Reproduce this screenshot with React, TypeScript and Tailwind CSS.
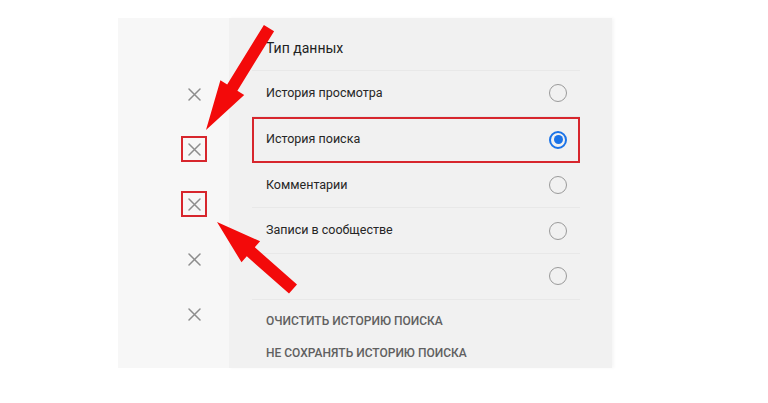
import React from 'react';

const rows = [
  { label: 'История просмотра', checked: false },
  { label: 'История поиска', checked: true },
  { label: 'Комментарии', checked: false },
  { label: 'Записи в сообществе', checked: false },
  { label: '', checked: false },
];

function CloseIcon() {
  return (
    <svg width="13" height="13" viewBox="0 0 13 13" fill="none">
      <path d="M1 1L12 12M12 1L1 12" stroke="#8d8d8d" strokeWidth="1.5" strokeLinecap="round" />
    </svg>
  );
}

function Radio({ checked }: { checked: boolean }) {
  if (checked) {
    return (
      <div className="w-[18px] h-[18px] rounded-full border-2 border-[#1a73e8] flex items-center justify-center">
        <div className="w-[9px] h-[9px] rounded-full bg-[#1a73e8]" />
      </div>
    );
  }
  return <div className="w-[18px] h-[18px] rounded-full border-[1.5px] border-[#9a9a9a]" />;
}

export default function App() {
  return (
    <div
      className="relative w-[768px] h-[403px] bg-white overflow-hidden"
      style={{ fontFamily: 'Roboto, "Liberation Sans", sans-serif' }}
    >
      <div className="pt-[18px] pl-[118px] flex">
        {/* ─── left column with remove icons ─── */}
        <div className="w-[111px] h-[350px] bg-[#f7f7f7] flex flex-col items-start pl-[63px] pt-[63px] gap-[29px]">
          {[false, true, true, false, false].map((marked, i) => (
            <div
              key={i}
              className={`w-[26px] h-[26px] flex items-center justify-center border-2 ${marked ? 'border-[#d7262d]' : 'border-transparent'}`}
            >
              <CloseIcon />
            </div>
          ))}
        </div>

        {/* ─── data type panel ─── */}
        <div className="w-[383px] h-[350px] bg-[#f1f1f1] pl-[23px] pr-[32px] shadow-[2px_0_3px_rgba(0,0,0,0.04)]">
          <div className="h-[53px] pt-[20px] pl-[14px] border-b border-[#e8e8e8] text-[14px] leading-[20px] text-[#222]">
            Тип данных
          </div>
          {rows.map((row, i) => (
            <div
              key={i}
              className={`h-[45.75px] flex items-center justify-between ${row.checked ? 'border-2 border-[#d7262d] pl-[12px] pr-[11px]' : 'border-b border-[#e8e8e8] pl-[14px] pr-[13px]'}`}
            >
              <span className="text-[12.5px] text-[#262626]">{row.label}</span>
              <Radio checked={row.checked} />
            </div>
          ))}
          <div className="pl-[14px] pt-[13px] flex flex-col gap-[16px] text-[12px] leading-[16px] font-medium text-[#606060]">
            <span>ОЧИСТИТЬ ИСТОРИЮ ПОИСКА</span>
            <span>НЕ СОХРАНЯТЬ ИСТОРИЮ ПОИСКА</span>
          </div>
        </div>
      </div>

      {/* ─── annotation arrows ─── */}
      <svg className="absolute left-0 top-0 pointer-events-none" width="768" height="403" viewBox="0 0 768 403">
        <polygon
          points="263.9,24.9 274.1,31.2 237.4,90.7 244.2,94.9 206,130 220.4,80.2 227.2,84.4"
          fill="#f30a0a"
        />
        <polygon
          points="217,222 260.1,241.3 254.8,247.3 297,284.5 289,293.5 246.8,256.3 241.5,262.3"
          fill="#f30a0a"
        />
      </svg>
    </div>
  );
}
